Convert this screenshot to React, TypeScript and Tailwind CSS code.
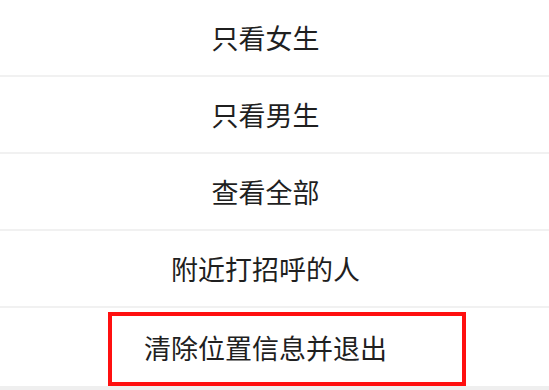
// 附近的人 — 筛选操作菜单
const items = ['只看女生', '只看男生', '查看全部', '附近打招呼的人', '清除位置信息并退出']

export default function App() {
  return (
    <div
      className="relative h-[390px] w-[549px] overflow-hidden bg-[#efefef]"
      style={{ fontFamily: '"Noto Sans CJK SC", "Noto Sans", sans-serif' }}
    >
      <ul className="flex flex-col bg-white">
        {items.map((t, i) => (
          <li
            key={t}
            className={`flex h-[77px] items-center justify-center pr-[18px] text-[27px] leading-none text-[#1f1f1f] ${
              i < items.length - 1 ? 'border-b-2 border-[#f1f1f1]' : 'h-[78px]'
            }`}
          >
            {t}
          </li>
        ))}
      </ul>

      {/* 标注框 */}
      <div className="pointer-events-none absolute left-[108px] top-[312px] h-[74px] w-[358px] border-4 border-[#ff1010]" />
    </div>
  )
}
